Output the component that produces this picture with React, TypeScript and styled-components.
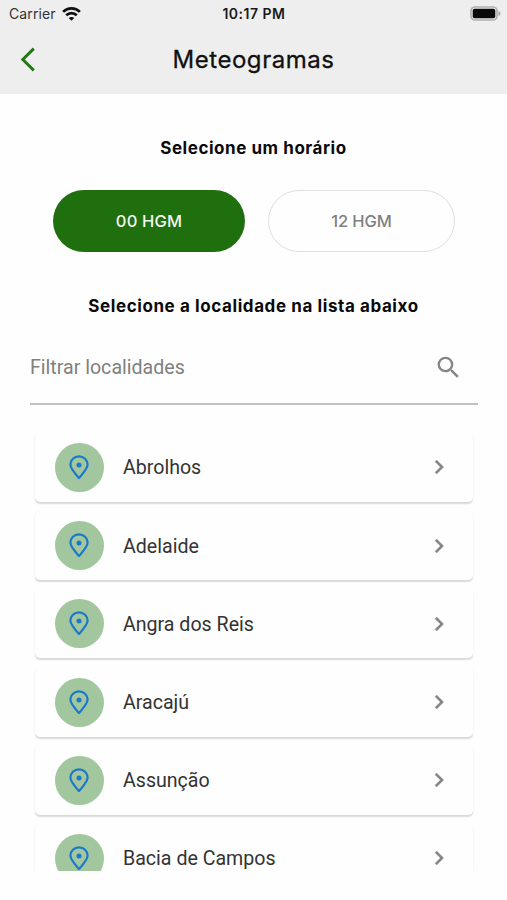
import React from "react";
import styled, { createGlobalStyle } from "styled-components";

const GlobalStyle = createGlobalStyle`
  * { box-sizing: border-box; }
  body { margin: 0; background: #fefefe; font-family: Roboto, sans-serif; overflow: hidden; }
  button { font: inherit; border: 0; background: none; padding: 0; }
  svg { display: block; flex: none; }
`;

const Screen = styled.main`
  width: 507px;
  height: 900px;
  overflow: hidden;
  display: flex;
  flex-direction: column;
  background: #fefefe;
`;

const Header = styled.header`
  flex: none;
  height: 94px;
  background: #eeeeee;
`;

const StatusBar = styled.div`
  display: grid;
  grid-template-columns: 1fr auto 1fr;
  align-items: center;
  height: 27px;
  padding: 0 6px 0 9px;
  font-family: Inter, sans-serif;
`;

const Carrier = styled.div`
  display: flex;
  align-items: center;
  gap: 6px;
  font-size: 14px;
  letter-spacing: 0.1px;
  color: #333;
`;

const Clock = styled.time`
  margin-left: -2px;
  font-size: 14px;
  font-weight: 600;
  letter-spacing: 0.5px;
  color: #1a1a1a;
`;

const BatterySlot = styled.div`
  display: flex;
  justify-content: flex-end;
`;

const TitleBar = styled.div`
  display: grid;
  grid-template-columns: 40px 1fr 40px;
  align-items: center;
  height: 66px;
  padding: 0 20px;
`;

const Title = styled.h1`
  margin: 0;
  text-align: center;
  font: 400 24px/30px Inter, sans-serif;
  letter-spacing: 0.55px;
  -webkit-text-stroke: 0.3px #111;
  color: #111;
`;

const SectionTitle = styled.h2<{ $tracking: number }>`
  flex: none;
  margin: 0;
  text-align: center;
  white-space: nowrap;
  font: 700 17px/26px Inter, sans-serif;
  letter-spacing: ${(p) => p.$tracking}px;
  color: #0a0a0a;
`;

const Hours = styled.div`
  flex: none;
  display: flex;
  gap: 23px;
  margin: 29.7px 52px 41.3px 53px;
  height: 62px;
`;

const HourButton = styled.button<{ $active?: boolean }>`
  && {
    width: ${(p) => (p.$active ? 192 : 187)}px;
    border-radius: 31px;
    border: ${(p) => (p.$active ? "0" : "1px solid #dedede")};
    background: ${(p) => (p.$active ? "#1f6f0f" : "#fefefe")};
    color: ${(p) => (p.$active ? "#f3f8f2" : "#808080")};
    font: 500 16.5px/24px Inter, sans-serif;
    letter-spacing: ${(p) => (p.$active ? 0.15 : -0.1)}px;
  }
`;

const Content = styled.section`
  flex: none;
  height: 777px;
  padding-top: 40.5px;
  display: flex;
  flex-direction: column;
  overflow: hidden;
`;

const Search = styled.label`
  flex: none;
  display: flex;
  justify-content: space-between;
  align-items: center;
  height: 74px;
  margin: 11.5px 29px 28px 30px;
  padding: 1px 15px 0 0;
  border-bottom: 2px solid #c0c2c0;
  color: #808080;
  font-size: 19.6px;
`;

const List = styled.ul`
  flex: none;
  list-style: none;
  margin: 0;
  padding: 0 34px 0 35px;
  display: flex;
  flex-direction: column;
  gap: 9.2px;
`;

const Card = styled.li`
  display: flex;
  align-items: center;
  height: 69px;
  padding: 0 20.5px 0 19.6px;
  border-radius: 5px;
  background: #fefefe;
  box-shadow: 0 1.5px 1.5px rgba(0, 0, 0, 0.15);
`;

const Avatar = styled.span`
  flex: none;
  display: grid;
  place-items: center;
  width: 49px;
  height: 49px;
  border-radius: 50%;
  background: #a2c69e;
`;

const Place = styled.span`
  flex: 1;
  margin-left: 19.4px;
  padding-top: 1px;
  font-size: 19.6px;
  color: #333;
`;

const WifiIcon = () => (
  <svg width="19" height="14" viewBox="0 0 19 14" fill="none" stroke="#111" strokeWidth="2.7">
    <path d="M1.1 4.9C5.8.2 13.2.2 17.9 4.9" />
    <path d="M4.2 8.3c3-2.9 7.6-2.9 10.6 0" />
    <path d="M9.5 13.8 6.7 11c1.6-1.4 4-1.4 5.6 0z" fill="#111" stroke="none" />
  </svg>
);

const BatteryIcon = () => (
  <svg width="31" height="15" viewBox="0 0 31 15">
    <rect x="1" y="1" width="26" height="13" rx="4" fill="none" stroke="#b0b0b0" strokeWidth="1.7" />
    <rect x="2.7" y="2.7" width="22.6" height="9.6" rx="2" fill="#080808" />
    <path d="M28.4 5v5c2.8-1 2.8-4 0-5z" fill="#aaa" />
  </svg>
);

const BackIcon = () => (
  <svg width="16" height="26" viewBox="0 0 16 26" fill="none" stroke="#227812" strokeWidth="2.9">
    <path d="M13.8 1.6 2.8 12.5 13.8 23.4" />
  </svg>
);

const SearchIcon = () => (
  <svg width="29" height="29" viewBox="0 0 24 24" fill="#858585">
    <path d="M15.5 14h-.79l-.28-.27A6.47 6.47 0 0 0 16 9.5 6.5 6.5 0 1 0 9.5 16c1.61 0 3.09-.59 4.23-1.57l.27.28v.79l5 4.99L20.49 19l-4.99-5zm-6 0C7.01 14 5 11.99 5 9.5S7.01 5 9.5 5 14 7.01 14 9.5 11.99 14 9.5 14z" />
  </svg>
);

const PinIcon = () => (
  <svg width="20" height="25" viewBox="0 0 20 25">
    <path
      d="M10 23C6.5 19.2 1.4 13.8 1.4 9.6a8.6 8.3 0 0 1 17.2 0C18.6 13.8 13.5 19.2 10 23z"
      fill="none"
      stroke="#1c78cb"
      strokeWidth="2.2"
      strokeLinejoin="round"
    />
    <circle cx="10" cy="9.9" r="2.5" fill="#1c78cb" />
  </svg>
);

const ChevronIcon = () => (
  <svg width="28" height="28" viewBox="0 0 24 24" fill="#858585" stroke="#858585" strokeWidth="0.3">
    <path d="M10 6 8.59 7.41 13.17 12l-4.58 4.59L10 18l6-6z" />
  </svg>
);

const places = ["Abrolhos", "Adelaide", "Angra dos Reis", "Aracajú", "Assunção", "Bacia de Campos"];

export default function App() {
  return (
    <>
      <GlobalStyle />
      <Screen>
        <Header>
          <StatusBar>
            <Carrier>
              <span>Carrier</span>
              <WifiIcon />
            </Carrier>
            <Clock>10:17 PM</Clock>
            <BatterySlot>
              <BatteryIcon />
            </BatterySlot>
          </StatusBar>
          <TitleBar>
            <button aria-label="Voltar">
              <BackIcon />
            </button>
            <Title>Meteogramas</Title>
          </TitleBar>
        </Header>
        <Content>
          <SectionTitle $tracking={0.55}>Selecione um horário</SectionTitle>
          <Hours>
            <HourButton $active>00 HGM</HourButton>
            <HourButton>12 HGM</HourButton>
          </Hours>
          <SectionTitle $tracking={0.59}>Selecione a localidade na lista abaixo</SectionTitle>
          <Search>
            <span>Filtrar localidades</span>
            <SearchIcon />
          </Search>
          <List>
            {places.map((place) => (
              <Card key={place}>
                <Avatar>
                  <PinIcon />
                </Avatar>
                <Place>{place}</Place>
                <ChevronIcon />
              </Card>
            ))}
          </List>
        </Content>
      </Screen>
    </>
  );
}
